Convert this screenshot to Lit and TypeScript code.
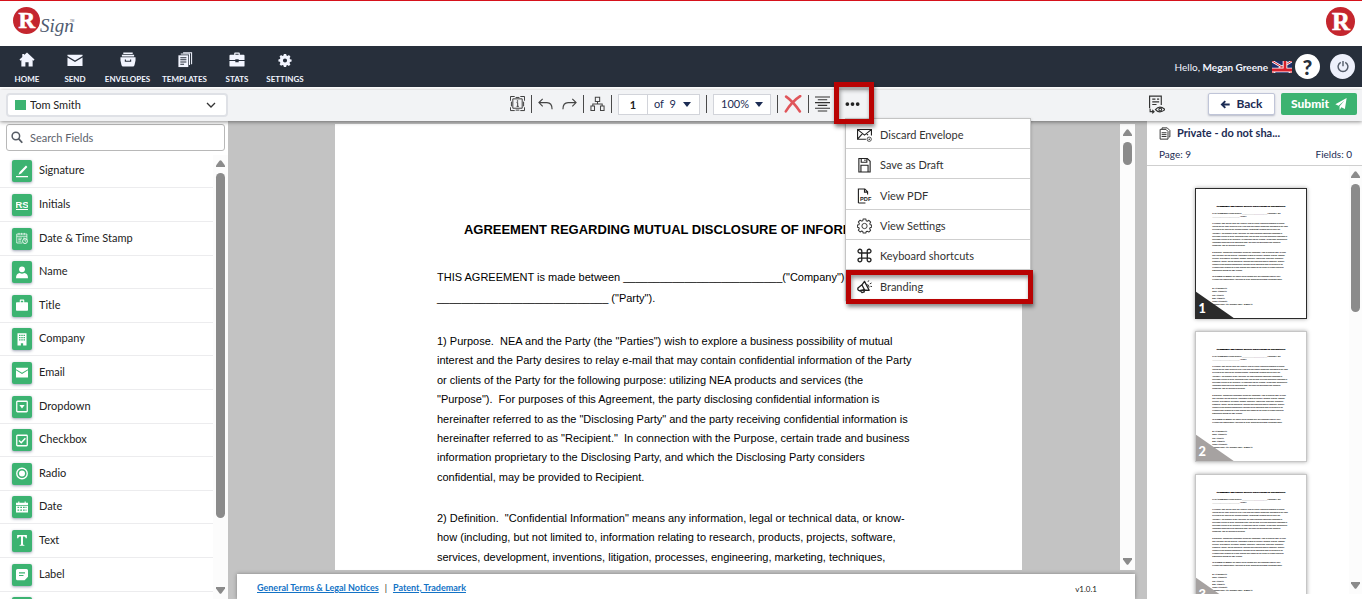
import { LitElement, html, svg, css } from "lit";
import { customElement, property } from "lit/decorators.js";

const PARAGRAPHS: string[][] = [
  [
    '1) Purpose.  NEA and the Party (the "Parties") wish to explore a business possibility of mutual',
    "interest and the Party desires to relay e-mail that may contain confidential information of the Party",
    "or clients of the Party for the following purpose: utilizing NEA products and services (the",
    '"Purpose").  For purposes of this Agreement, the party disclosing confidential information is',
    'hereinafter referred to as the "Disclosing Party" and the party receiving confidential information is',
    'hereinafter referred to as "Recipient."  In connection with the Purpose, certain trade and business',
    "information proprietary to the Disclosing Party, and which the Disclosing Party considers",
    "confidential, may be provided to Recipient.",
  ],
  [
    '2) Definition.  "Confidential Information" means any information, legal or technical data, or know-',
    "how (including, but not limited to, information relating to research, products, projects, software,",
    "services, development, inventions, litigation, processes, engineering, marketing, techniques,",
  ],
];

const TITLE = "AGREEMENT REGARDING MUTUAL DISCLOSURE OF INFORMATION";
const INTRO = 'THIS AGREEMENT is made between __________________________("Company") and';
const INTRO_2 = '____________________________ ("Party").';

const MINI_LINES: [number, string][] = [
  [157, INTRO],
  [178, INTRO_2],
  ...PARAGRAPHS[0].map((t, i): [number, string] => [220 + i * 19.4, t]),
  ...[
    ...PARAGRAPHS[1],
    "customers, pricing, internal procedures, business and marketing plans or strategies, finances,",
    "employees and business opportunities) disclosed by the Disclosing Party to Recipient in an",
    "electronic form identified by a mark that has been tagged by the sender in certain system for",
    "transmission through the NEA network.",
  ].map((t, i): [number, string] => [398 + i * 19.4, t]),
  [550, "IN WITNESS WHEREOF, the parties hereto, through their duly authorized officers, have"],
  [569, "executed this Confidentiality Agreement as of the Commencement Date designated above."],
  [627, "By:  <<Signature>>"],
  [646, "Name:  <<Name>>"],
  [666, "Title:  <<Title>>"],
  [685, "Date:  <<Date>>"],
  [704, "Initials:  <<Initials>>"],
  [724, 'Company name: <<if "Company name", INSERT >>'],
];

const ICONS: Record<string, unknown> = {
  home: svg`<path fill="currentColor" d="M8 .5 16 8l-1 1.200-1-.8V15.500H9.700V11H6.300v4.500H2V8.400l-1 .8L0 8l3-2.800V2h2v1.300z"/>`,
  mail: svg`<path fill="currentColor" d="M0 3h16v1.300L8 9.100 0 4.300zM0 5.800l8 4.800 8-4.800v9.200H0z"/>`,
  envelopes: svg`<path fill="currentColor" d="M3 .5h10v1.700H3zM1.500 3h13v1.700h-13zM0 5.500h16V9l-1 4.500q-.3 2-2 2H3q-1.700 0-2-2L0 9z"/><path d="M5.200 8v1.800h5.600V8" fill="none" stroke="#272f3b" stroke-width="1.200"/>`,
  templates: svg`<path fill="currentColor" d="M1 3.500h10.500v12.500H1z"/><path d="M3.500 2.200h9.300v11.500M6 .9h9v12" fill="none" stroke="currentColor" stroke-width="1.100"/><path d="M3 6h6.500M3 8.300h6.500M3 10.600h6.500M3 13h4" stroke="#272f3b" stroke-width="1.100"/>`,
  stats: svg`<path fill="currentColor" d="M5 3V1.500Q5 .5 6 .5h4q1 0 1 1V3h4q1 0 1 1v4.500H9.800v-.8H6.200v.8H0V4q0-1 1-1zm1.300 0h3.400V1.800H6.300zM0 9.500h6.200v1.300h3.600V9.500H16v5q0 1-1 1H1q-1 0-1-1z"/>`,
  gear: svg`<path fill="currentColor" fill-rule="evenodd" d="M6.800 2h2.400l.4 1.700 1.100.5 1.500-.9 1.600 1.700-.9 1.400.5 1.200 1.600.3v2.300l-1.700.4-.5 1.100 1 1.500-1.700 1.600-1.500-.9-1.100.4L9.200 16H6.800l-.4-1.700-1.100-.5-1.500.9-1.600-1.600.9-1.500-.5-1.200L1 10.100V7.900l1.600-.4.500-1.200-.9-1.400L3.800 3.300l1.500.9 1.100-.5zM8 6.800a2.200 2.200 0 1 0 0 4.400 2.200 2.200 0 0 0 0-4.400z"/>`,
  info: svg`<path fill="none" stroke="#333" d="M.5 5V.5H5M11 .5h4.500V5M15.500 12v3.500H11M5 15.500H.5V12M6 1.500h4M6 15h4M1.500 6v5M14.500 6v5M3 3h10v10H3zM8.200 7v4M7 7h1.200M7 11h2.400"/><circle cx="8" cy="5.200" r=".8" fill="#333"/>`,
  undo: svg`<path fill="none" stroke="#444" stroke-width="1.200" d="M5 3 1 7l4 4M1 7h8.500Q15 7 15 14"/>`,
  redo: svg`<path fill="none" stroke="#444" stroke-width="1.200" d="m11 3 4 4-4 4M15 7H6.500Q1 7 1 14"/>`,
  tree: svg`<path fill="none" stroke="#444" stroke-width="1.100" d="M5.700 1.200h4.600v4.600H5.700zM1 10.700h3.800v4.800H1zM11.200 10.700H15v4.800h-3.800zM8 6v2.500M3 10.500v-2h10v2"/>`,
  cross: svg`<path fill="none" stroke="#e0555a" stroke-width="2.400" stroke-linecap="round" d="M1.500 1.500Q8 6 14.500 15.500M14.800 1Q7 6 1.200 15.500"/>`,
  lines: svg`<path stroke="#333" stroke-width="1.200" d="M0 1h16M3 4h10M0 7h16M3 10h10M0 13h16M3 16h10"/>`,
  dots: svg`<g fill="#222"><circle cx="2.500" cy="8.500" r="2"/><circle cx="8" cy="8.500" r="2"/><circle cx="13.500" cy="8.500" r="2"/></g>`,
  discard: svg`<path fill="none" stroke="#222" stroke-width="1.200" d="M9.500 13H.6V2.600h14.800V9M.8 2.800 8 8.600l7.200-5.800M.8 12.700 5.800 7M10.200 7l1.600 1.600"/><circle cx="13" cy="13" r="2.300" fill="#fff" stroke="#444"/><circle cx="13" cy="13" r=".7"/>`,
  save: svg`<path fill="none" stroke="#222" stroke-width="1.200" d="M2 1.500h9l3 3v11.500H2zM4.500 1.500v4h6v-4M4.200 16V8.700h7.600V16M8.500 2.500v1.800"/>`,
  pdf: svg`<path fill="none" stroke="#222" stroke-width="1.200" d="M1.500 16V1h6.800l3 3v3M8 1v3.300h3.300M1.500 16H9"/><text x="3.300" y="13.800" font-family="Liberation Sans" font-size="6" font-weight="700" fill="#222">PDF</text>`,
  cog: svg`<path fill="none" stroke="#333" stroke-width="1.100" stroke-linejoin="round" d="M6.600 1h2.800l.4 1.900 1.200.5 1.700-1 1.900 1.900-1 1.700.5 1.200 1.500.3v2.300l-1.600.4-.5 1.200 1 1.700-1.900 1.900-1.700-1-1.100.4-.4 1.600H6.600l-.4-1.600-1.200-.5-1.700 1-1.900-1.900 1-1.700-.5-1.200-1.500-.3V7.500l1.600-.4.500-1.200-1-1.700 1.900-1.900 1.700 1 1.100-.4z"/><circle cx="8" cy="8.500" r="2.800" fill="none" stroke="#333"/>`,
  command: svg`<path fill="none" stroke="#222" stroke-width="1.400" d="M5 5v6M11 5v6M5 5.300h6M5 10.700h6M5 5.300H3.200a2 2 0 1 1 1.900-2V5.300M11 5.300h1.800a2 2 0 1 0-1.900-2V5.300M5 10.700H3.200a2 2 0 1 0 1.900 2v-2M11 10.700h1.800a2 2 0 1 1-1.900 2v-2"/>`,
  horn: svg`<path fill="none" stroke="#222" stroke-width="1.400" stroke-linejoin="round" d="m8 2.500 5 9.500-6.500-.3-4 .8Q0 11.500 1.300 9.200l4-3zM3.500 12.300l1.800 2.200 2.500-.8-.5-1.900M5.300 6.300l2.700 5.200"/><path fill="none" stroke="#222" d="M10.300 6q2.500-.5 2.600 3M11.700 3l.8-1.500M13.700 5.200l1.800-1M14.300 7.800l1.700.2"/>`,
  preview: svg`<path fill="none" stroke="#333" stroke-width="1.100" d="M1.500 12V.6h11V9M4 3.500h3M4 6h6.500M4 8.500h4M8.500 3.500h2M2 12.500v2.700h3.500M4 13.500l1.700 1.700L4 16.800M7 13.300q4-4.600 9 0-5 4.300-9 0z"/><circle cx="11.500" cy="13.200" r="1.300" fill="none" stroke="#333"/>`,
  document: svg`<path fill="none" stroke="#333" stroke-width="1.300" d="M4 2.500V1h7l3.500 3.500V13H13M1.500 3h7.800L12 5.800V16H1.500z"/><path stroke="#333" stroke-width="1.300" d="M3.500 7.500H10M3.500 10H10M3.500 12.500H10"/>`,
  back: svg`<path fill="none" stroke="currentColor" stroke-width="3" d="M8.500 3 3 8.500 8.500 14M3.500 8.500H15.500"/>`,
  plane: svg`<path fill="currentColor" d="M16 0 13.500 15.500 8.500 13 6 17v-5.300L13 3.500 4.500 11 0 8.900z"/>`,
  search: svg`<circle cx="6.500" cy="6.500" r="5" fill="none" stroke="#555b64" stroke-width="2"/><path d="m10 10 5 5.500" stroke="#555b64" stroke-width="2.400"/>`,
  power: svg`<path fill="none" stroke="#545c6a" stroke-width="1.900" d="M5 3a6.500 6.500 0 1 0 6 0M8 1v7"/>`,
  signature: svg`<path fill="#fff" d="m13.300.5 1.900 1.900L7 11.300l-3.700 1.400L4.800 9zM0 14.500h16V16H0z"/>`,
  initials: svg`<text x="8" y="13" text-anchor="middle" font-family="Liberation Sans" font-size="13" font-weight="700" fill="#fff">RS</text><path fill="#fff" d="M-1 14.500h18v1.300H-1z"/>`,
  datetime: svg`<path fill="none" stroke="#fff" d="M1 2.500h13.500v8M1 2.500v12h7.500M1 5.500h13.500M4 1v2.500M7.500 1v2.500M11 1v2.500M3 8h5M3 10h4M3 12h4M9.500 8h3"/><circle cx="12" cy="12" r="3.200" fill="none" stroke="#fff" stroke-width="1.200"/><path d="M12 10v2h1.600" stroke="#fff" fill="none"/>`,
  person: svg`<circle cx="8" cy="4.300" r="3.900" fill="#fff"/><path fill="#fff" d="M0 16q0-6 5-6.700 3 1.700 6 0 5 .7 5 6.700z"/>`,
  briefcase: svg`<path fill="#fff" fill-rule="evenodd" d="M5 4V1.500q0-1 1-1h4q1 0 1 1V4h4q1 0 1 1v9.500q0 1-1 1H1q-1 0-1-1V5q0-1 1-1zm1.400 0h3.200V2H6.400z"/>`,
  building: svg`<path fill="#fff" fill-rule="evenodd" d="M2 0h12v16.500H9.500v-3h-3v3H2zM4 2v1.700h2V2zm3 0v1.700h2V2zm3 0v1.700h2V2zM4 5v1.700h2V5zm3 0v1.700h2V5zm3 0v1.700h2V5zM4 8v1.700h2V8zm3 0v1.700h2V8zm3 0v1.700h2V8z"/>`,
  email: svg`<path fill="#fff" d="M0 2h16v2L8 8.700 0 4zM0 5.500l8 4.900 8-4.900V15H0z"/>`,
  dropdown: svg`<rect x="1" y="1.500" width="14" height="14" rx="1" fill="none" stroke="#fff" stroke-width="1.700"/><path d="M4.500 6.500h7L8 11.300z" fill="#fff"/>`,
  checkbox: svg`<rect x="1" y="1.500" width="14" height="14" rx="1" fill="none" stroke="#fff" stroke-width="1.700"/><path d="m4 8.500 3 3 5.500-6" fill="none" stroke="#fff" stroke-width="2"/>`,
  radio: svg`<circle cx="8" cy="8.500" r="7" fill="none" stroke="#fff" stroke-width="1.800"/><circle cx="8" cy="8.500" r="4" fill="#fff"/>`,
  calendar: svg`<path fill="#fff" fill-rule="evenodd" d="M0 2h16v3H0zM3 .5h1.500V2H3zm8.500 0H13V2h-1.500zM0 6h16v9H0zM2 7.500V9h2.200V7.500zm3.700 0V9H8V7.500zm3.700 0V9h2.200V7.500zM2 11v1.700h2.200V11zm3.700 0v1.700H8V11zm3.700 0v1.700h2.200V11zm3.300-3.500V9H14V7.500zm0 3.500v1.700H14V11z"/>`,
  text: svg`<path fill="#fff" d="M1.500 1h13v4.500H13Q12.800 3.200 11 3H9.300v10.500q0 1 2 1.200v.8H4.700v-.8q2-.2 2-1.200V3H5Q3.200 3.200 3 5.500H1.500z"/>`,
  label: svg`<path fill="#fff" fill-rule="evenodd" d="M2 1h12q2 0 2 2v8.500L11.500 16H2q-2 0-2-2V3q0-2 2-2zm2 4.500V7h8V5.500zM4 9v1.500h6V9z"/>`,
};

const icon = (name: string, cls = "") =>
  html`<svg class="icon ${cls}" viewBox="0 0 16 17" aria-hidden="true">${ICONS[name]}</svg>`;

const rLogo = () => svg`
  <circle cx="13.500" cy="13.500" r="13.500" fill="#c4262e"/>
  <text x="13.800" y="21" text-anchor="middle" font-family="Liberation Serif" font-size="23" font-weight="700" fill="#fff" stroke="#fff" stroke-width=".6">R</text>`;

const NAV: [string, string][] = [
  ["home", "HOME"],
  ["mail", "SEND"],
  ["envelopes", "ENVELOPES"],
  ["templates", "TEMPLATES"],
  ["stats", "STATS"],
  ["gear", "SETTINGS"],
];

const FIELDS: [string, string][] = [
  ["signature", "Signature"],
  ["initials", "Initials"],
  ["datetime", "Date & Time Stamp"],
  ["person", "Name"],
  ["briefcase", "Title"],
  ["building", "Company"],
  ["email", "Email"],
  ["dropdown", "Dropdown"],
  ["checkbox", "Checkbox"],
  ["radio", "Radio"],
  ["calendar", "Date"],
  ["text", "Text"],
  ["label", "Label"],
  ["checkbox", ""],
];

const MENU: [string, string][] = [
  ["discard", "Discard Envelope"],
  ["save", "Save as Draft"],
  ["pdf", "View PDF"],
  ["cog", "View Settings"],
  ["command", "Keyboard shortcuts"],
  ["horn", "Branding"],
];

@customElement("scroll-rail")
export class ScrollRail extends LitElement {
  @property({ type: Number }) extent = 50;

  static styles = css`
    :host {
      display: flex;
      flex-direction: column;
      align-items: center;
      gap: 6px;
      flex: 0 0 15px;
      padding: 5px 0;
      box-sizing: border-box;
      background: #fcfcfc;
    }
    .arrow {
      display: block;
      width: 9px;
      height: 7px;
      fill: #8b8b8b;
    }
    .track {
      flex: 1;
      width: 9px;
    }
    .thumb {
      border-radius: 5px;
      background: #8b8b8b;
    }
  `;

  render() {
    return html`
      <svg class="arrow" viewBox="0 0 9 7"><path d="M3.500.8q1-1 2 0L9 5.500V7H0V5.500z" /></svg>
      <div class="track"><div class="thumb" style="height:${this.extent}%"></div></div>
      <svg class="arrow" viewBox="0 0 9 7"><path d="M3.500 6.200q1 1 2 0L9 1.500V0H0v1.500z" /></svg>
    `;
  }
}

@customElement("page-thumb")
export class PageThumb extends LitElement {
  @property({ type: Number }) number = 1;
  @property({ type: Boolean }) current = false;

  static styles = css`
    :host {
      display: block;
      flex: none;
    }
    .card {
      display: block;
      box-sizing: border-box;
      width: 112px;
      padding: 0;
      border: 1px solid #c6c6c6;
      background: #fff;
      box-shadow: 0 0 4px rgba(0, 0, 0, 0.35);
    }
    .current {
      border-color: #2b2b2b;
    }
    .sheet {
      display: block;
      width: 100%;
    }
  `;

  render() {
    return html`
      <button class="card ${this.current ? "current" : ""}" aria-label="Page ${this.number}">
        <svg class="sheet" viewBox="0 0 687 806" font-family="Liberation Sans" font-size="11" fill="#000">
          <text x="343" y="110" text-anchor="middle" font-size="13" font-weight="700" stroke="#000">${TITLE}</text>
          <g stroke="#222" stroke-width=".3">${MINI_LINES.map(([y, t]) => svg`<text x="102" y=${y}>${t}</text>`)}</g>
          <path d="M0 642 236 806H0z" fill=${this.current ? "#2b2b2b" : "#a6a2a1"} />
          <text x="16" y="772" font-family="Lato" font-size="80" font-weight="900" fill="#fff">${this.number}</text>
        </svg>
      </button>
    `;
  }
}

@customElement("app-root")
export class AppRoot extends LitElement {
  static styles = css`
    :host {
      display: flex;
      flex-direction: column;
      height: 100vh;
      overflow: hidden;
      background: #fff;
      color: #222;
      font: 11px/16px Lato, "Liberation Sans", sans-serif;
    }
    *,
    *::before,
    *::after {
      box-sizing: border-box;
    }
    button,
    input,
    select {
      font: inherit;
      color: inherit;
      margin: 0;
    }
    button {
      padding: 0;
      border: 0;
      background: none;
    }
    .icon {
      display: block;
      flex: none;
      width: 15px;
      height: 16px;
    }

    .brand {
      display: flex;
      justify-content: space-between;
      flex: 0 0 46px;
      padding: 6px 7px 0 13px;
      border-top: 1px solid #d6121b;
    }
    .logo {
      width: 62px;
      height: 38px;
      overflow: visible;
    }
    .mark {
      width: 29px;
      height: 29px;
    }

    .nav {
      display: flex;
      align-items: center;
      justify-content: space-between;
      flex: 0 0 41px;
      padding: 0 7px 0 3px;
      background: #272f3b;
      color: #f2f5ff;
    }
    .links {
      display: flex;
      padding-top: 3px;
    }
    .link {
      display: flex;
      flex-direction: column;
      align-items: center;
      gap: 6px;
      width: 48px;
      color: inherit;
      font-size: 8px;
      font-weight: 700;
      line-height: 10px;
      text-decoration: none;
    }
    .wide {
      width: 57px;
    }
    .link .icon {
      width: 18px;
    }
    .user {
      display: flex;
      align-items: center;
    }
    .hello {
      font-size: 10px;
      margin-right: 4px;
    }
    .flag {
      width: 20px;
      height: 12px;
      margin-right: 3px;
    }
    .round {
      display: grid;
      place-items: center;
      width: 25px;
      height: 25px;
      border-radius: 50%;
      background: #fff;
      color: #272f3b;
      font-size: 21px;
      font-weight: 900;
      line-height: 24px;
    }
    .round + .round {
      margin-left: 10px;
      background: #edf0fb;
    }
    .round .icon {
      width: 12px;
      height: 13px;
    }

    .bar {
      display: grid;
      grid-template-columns: 228px 1fr 215px;
      align-items: center;
      flex: 0 0 31px;
      margin-top: 3px;
      position: relative;
      z-index: 2;
      background: #f2f3f5;
      box-shadow: 0 1px 4px rgba(0, 0, 0, 0.45);
    }
    .recipient {
      display: flex;
      align-items: center;
      gap: 4px;
      height: 24px;
      margin: -2px 0 0 6px;
      padding: 0 10px 0 7px;
      border: 2px solid #dfe1e6;
      border-radius: 4px;
      background: #fff;
    }
    .swatch {
      width: 11px;
      height: 10px;
      background: #3cb371;
    }
    .plain {
      flex: 1;
      min-width: 0;
      padding: 0;
      border: 0;
      background: none;
      appearance: none;
      outline: none;
    }
    .chevron {
      width: 10px;
      height: 6px;
    }
    .tools {
      display: flex;
      align-items: center;
      justify-content: center;
      gap: 6px;
      height: 28px;
      margin-bottom: 3px;
      padding-left: 3px;
    }
    .split {
      width: 1px;
      height: 18px;
      background: #4a4a4a;
    }
    .pair {
      display: flex;
      gap: 9px;
    }
    .box {
      display: flex;
      align-items: center;
      height: 21px;
      border: 1px solid #d2d4da;
      background: #fff;
      color: #1c2c54;
    }
    .pageno {
      width: 29px;
      height: 19px;
      padding: 0;
      border: 0;
      border-right: 1px solid #d2d4da;
      color: #222;
      font-weight: 700;
      text-align: center;
    }
    .pick {
      display: flex;
      align-items: center;
      width: 51px;
      padding: 0 8px 0 6px;
    }
    .zoom {
      width: 56px;
      padding: 0 7px;
    }
    .caret {
      width: 8px;
      height: 5px;
      flex: none;
      fill: #1c2c54;
    }
    .x {
      width: 18px;
      height: 18px;
    }
    .more {
      position: relative;
    }
    .dots {
      display: grid;
      place-items: center;
      width: 32px;
      height: 28px;
    }
    .menu {
      position: absolute;
      top: 28px;
      left: 9px;
      display: grid;
      grid-auto-rows: 30px 30px 31px 30px 30px;
      width: 186px;
      margin: 0;
      padding: 0;
      border: 1px solid #c4c4c4;
      background: #fff;
      list-style: none;
      box-shadow: 0 1px 3px rgba(0, 0, 0, 0.2);
    }
    .entry {
      position: relative;
      border-bottom: 1px solid #cfcfcf;
    }
    .entry:last-child {
      border-bottom: 0;
    }
    .command {
      display: flex;
      align-items: center;
      gap: 8px;
      width: 100%;
      height: 100%;
      padding: 3px 0 0 11px;
      color: #333;
      text-align: left;
    }
    .ring {
      position: absolute;
      border: 5px solid #b90303;
      box-shadow: 1px 3px 4px rgba(0, 0, 0, 0.45), inset 1px 3px 4px rgba(0, 0, 0, 0.4);
      pointer-events: none;
    }
    .ring-dots {
      inset: -8px -6px -6px -2px;
    }
    .ring-entry {
      inset: 0 -3px -4px 0;
    }
    .actions {
      display: flex;
      align-items: center;
      height: 28px;
      margin-bottom: 3px;
      padding-right: 5px;
    }
    .preview {
      margin: 0 auto 0 1px;
    }
    .preview .icon {
      width: 17px;
      height: 19px;
    }
    .btn {
      display: flex;
      align-items: center;
      justify-content: center;
      gap: 6px;
      height: 22px;
      border-radius: 2px;
      font-size: 12px;
      font-weight: 700;
    }
    .back {
      width: 67px;
      border: 1px solid #c0c5d8;
      background: #fff;
      color: #1c2c54;
      box-shadow: 0 1px 2px rgba(40, 50, 90, 0.3);
    }
    .back .icon {
      width: 10px;
      height: 11px;
    }
    .submit {
      width: 76px;
      margin-left: 6px;
      background: #3cb371;
      color: #fff;
      font-weight: 900;
    }
    .submit .icon {
      width: 12px;
      height: 12px;
    }

    .main {
      display: grid;
      grid-template-columns: 228px 1fr 215px;
      flex: 1;
      min-height: 0;
      background: #c3c3c3;
    }
    .fields,
    .pages {
      display: flex;
      flex-direction: column;
      min-height: 0;
      background: #fff;
    }
    .search {
      display: flex;
      align-items: center;
      gap: 7px;
      flex: 0 0 27px;
      margin: 3px 3px 0 6px;
      padding: 0 5px 0 4px;
      border: 1px solid #b8b8b8;
      border-radius: 3px;
    }
    .search .icon {
      width: 12px;
      height: 13px;
    }
    .plain::placeholder {
      color: #5c626b;
      opacity: 1;
    }
    .scroll {
      display: flex;
      flex: 1;
      min-height: 0;
      margin-top: 4px;
    }
    .list {
      display: grid;
      grid-auto-rows: 33px 34px 34px 33px 34px;
      flex: 1;
      margin: 0;
      padding: 0;
      overflow: hidden;
      list-style: none;
    }
    .field {
      display: flex;
      align-items: center;
      gap: 7px;
      width: 100%;
      height: 100%;
      padding: 0 12px;
      border-bottom: 1px solid #ececee;
    }
    .name {
      padding-bottom: 2px;
    }
    .tile {
      display: grid;
      place-items: center;
      width: 20px;
      height: 22px;
      border-radius: 2px;
      background: #3cb371;
      box-shadow: 0 1px 3px rgba(40, 50, 90, 0.45);
    }
    .tile .icon {
      width: 12px;
      height: 13px;
    }

    .center {
      display: flex;
      flex-direction: column;
      gap: 4px;
      min-width: 0;
      min-height: 0;
      padding: 3px 12px 0 9px;
    }
    .viewer {
      display: flex;
      flex: 1;
      min-height: 0;
    }
    .canvas {
      flex: 1;
      min-width: 0;
      overflow: hidden;
    }
    .page {
      max-width: 687px;
      height: 100%;
      margin: 0 auto;
      padding: 96px 102px 0;
      background: #fff;
      color: #000;
      font: 11px/19px "Liberation Sans", Arial, sans-serif;
      white-space: pre;
    }
    .title {
      margin: 0;
      font-size: 13px;
      font-weight: 700;
      text-align: center;
    }
    .para {
      display: grid;
      grid-auto-rows: 19px 20px 19px 20px 19px;
      margin: 22px 0 0;
    }
    .intro {
      grid-auto-rows: 21px;
      margin-top: 29px;
    }
    .foot {
      display: flex;
      align-items: center;
      gap: 6px;
      flex: 0 0 25px;
      padding: 2px 38px 0 20px;
      background: #fff;
      box-shadow: 0 0 4px rgba(0, 0, 0, 0.35);
      font-size: 9px;
      line-height: 12px;
    }
    .legal {
      color: #1373c6;
      font-weight: 700;
    }
    .version {
      margin-left: auto;
      padding-top: 2px;
      font-size: 8px;
    }

    .head {
      display: grid;
      gap: 5px;
      flex: none;
      padding: 4px 10px 3px 12px;
      border-bottom: 1px solid #cfcfcf;
      color: #1c2c54;
    }
    .doc {
      display: flex;
      align-items: center;
      gap: 6px;
      margin: 0;
      font-size: 11px;
      font-weight: 700;
      line-height: 16px;
    }
    .doc .icon {
      width: 12px;
      height: 13px;
    }
    .counts {
      display: flex;
      justify-content: space-between;
      font-size: 10px;
    }
    .thumbs {
      display: flex;
      flex: 1;
      min-height: 0;
      margin-bottom: 5px;
    }
    .stack {
      display: flex;
      flex-direction: column;
      gap: 12px;
      flex: 1;
      padding: 22px 0 0 48px;
      overflow: hidden;
    }
    .slim {
      flex-basis: 13px;
    }
  `;

  private caret() {
    return html`<svg class="caret" viewBox="0 0 8 5"><path d="M0 0h8L4 5z" /></svg>`;
  }

  private header() {
    return html`
      <header class="brand">
        <svg class="logo" viewBox="0 0 62 38" role="img" aria-label="RSign">
          ${rLogo()}
          <text x="27" y="25" font-family="Liberation Serif" font-size="19" font-style="italic" fill="#4f5b70">Sign</text>
          <text x="57" y="15" font-family="Liberation Sans" font-size="3" fill="#5a6478">TM</text>
        </svg>
        <svg class="mark" viewBox="0 0 27 27" role="img" aria-label="R">${rLogo()}</svg>
      </header>
      <nav class="nav">
        <div class="links">
          ${NAV.map(
            ([i, t]) => html`<a class="link ${t.length === 9 ? "wide" : ""}" href="#">${icon(i)}${t}</a>`
          )}
        </div>
        <div class="user">
          <span class="hello">Hello, <b>Megan Greene</b></span>
          <svg class="flag" viewBox="0 0 20 12" role="img" aria-label="English">
            <path fill="#1d2d6b" d="M0 0h20v12H0z" />
            <path stroke="#fff" stroke-width="2.400" d="m0 0 20 12M20 0 0 12" />
            <path stroke="#d6202c" stroke-width="1" d="m0 0 20 12M20 0 0 12" />
            <path stroke="#fff" stroke-width="4.600" d="M13 0v9M0 9h20" />
            <path stroke="#d6202c" stroke-width="2.800" d="M13 0v9M0 9h20" />
          </svg>
          <button class="round">?</button>
          <button class="round" aria-label="Log out">${icon("power")}</button>
        </div>
      </nav>
    `;
  }

  private toolbar() {
    return html`
      <div class="bar">
        <label class="recipient">
          <span class="swatch"></span>
          <select class="plain" aria-label="Recipient">
            <option>Tom Smith</option>
          </select>
          <svg class="chevron" viewBox="0 0 10 6">
            <path fill="none" stroke="#333" stroke-width="1.300" d="m1 1 4 4 4-4" />
          </svg>
        </label>
        <div class="tools">
          <button aria-label="Information">${icon("info")}</button>
          <span class="split"></span>
          <div class="pair">
            <button aria-label="Undo">${icon("undo")}</button>
            <button aria-label="Redo">${icon("redo")}</button>
          </div>
          <span class="split"></span>
          <button aria-label="Workflow">${icon("tree")}</button>
          <span class="split"></span>
          <div class="box">
            <input class="pageno" aria-label="Page number" .value=${"1"} />
            <label class="pick">
              <select class="plain" aria-label="Page"><option>of&nbsp;&nbsp;9</option></select>
              ${this.caret()}
            </label>
          </div>
          <span class="split"></span>
          <div class="box">
            <label class="pick zoom">
              <select class="plain" aria-label="Zoom"><option>100%</option></select>
              ${this.caret()}
            </label>
          </div>
          <span class="split"></span>
          <button aria-label="Delete">${icon("cross", "x")}</button>
          <span class="split"></span>
          <button aria-label="Align">${icon("lines")}</button>
          <div class="more">
            <button class="dots" aria-label="More">${icon("dots")}</button>
            <ul class="menu">
              ${MENU.map(
                ([i, t]) => html`<li class="entry">
                  <button class="command">${icon(i)}${t}</button>
                  ${t === "Branding" ? html`<span class="ring ring-entry"></span>` : ""}
                </li>`
              )}
            </ul>
            <span class="ring ring-dots"></span>
          </div>
        </div>
        <div class="actions">
          <button class="preview" aria-label="Preview">${icon("preview")}</button>
          <button class="btn back">${icon("back")}Back</button>
          <button class="btn submit">Submit${icon("plane")}</button>
        </div>
      </div>
    `;
  }

  render() {
    return html`
      ${this.header()} ${this.toolbar()}
      <main class="main">
        <section class="fields">
          <label class="search">
            ${icon("search")}
            <input class="plain" aria-label="Search Fields" placeholder="Search Fields" />
          </label>
          <div class="scroll">
            <ul class="list">
              ${FIELDS.map(
                ([i, t]) => html`<li>
                  <button class="field"><span class="tile">${icon(i)}</span><span class="name">${t}</span></button>
                </li>`
              )}
            </ul>
            <scroll-rail extent="84.6"></scroll-rail>
          </div>
        </section>
        <section class="center">
          <div class="viewer">
            <div class="canvas">
              <article class="page"><h1 class="title">${TITLE}</h1><p class="para intro"><span>${INTRO}</span><span>${INTRO_2}</span></p>${PARAGRAPHS.map(
                (lines) => html`<p class="para">${lines.map((t) => html`<span>${t}</span>`)}</p>`
              )}</article>
            </div>
            <scroll-rail extent="5.600"></scroll-rail>
          </div>
          <footer class="foot">
            <a class="legal" href="#">General Terms &amp; Legal Notices</a>
            <span>|</span>
            <a class="legal" href="#">Patent, Trademark</a>
            <span class="version">v1.0.1</span>
          </footer>
        </section>
        <aside class="pages">
          <div class="head">
            <h2 class="doc">${icon("document")}Private - do not sha...</h2>
            <div class="counts"><span>Page: 9</span><span>Fields: 0</span></div>
          </div>
          <div class="thumbs">
            <div class="stack">
              <page-thumb number="1" current></page-thumb>
              <page-thumb number="2"></page-thumb>
              <page-thumb number="3"></page-thumb>
            </div>
            <scroll-rail class="slim" extent="32.600"></scroll-rail>
          </div>
        </aside>
      </main>
    `;
  }
}
